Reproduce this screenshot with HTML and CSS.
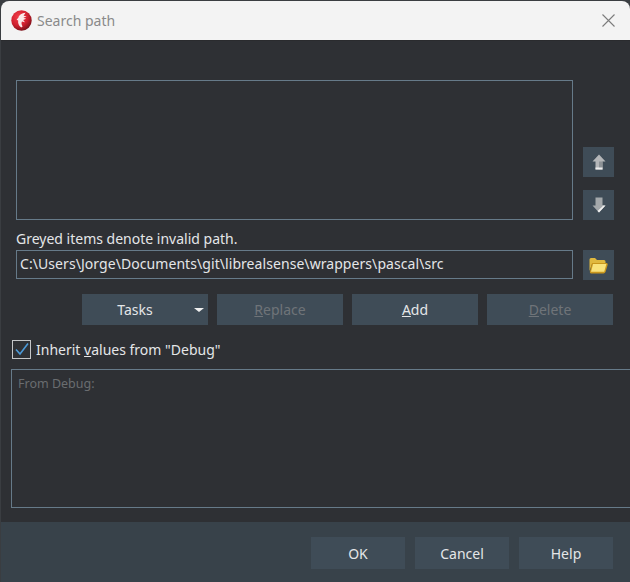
FILE: index.html
```html
<!DOCTYPE html>
<html lang="en">
<head>
    <meta charset="UTF-8">
    <meta name="viewport" content="width=device-width, initial-scale=1.0">
    <title>Search path</title>
    <link rel="stylesheet" href="styles.css">
</head>
<body>
    <div class="dialog">
        <div class="titlebar">
            <svg class="logo" width="21" height="21" viewBox="0 0 21 21">
                <defs>
                    <radialGradient id="logoRed" cx="38%" cy="32%" r="72%">
                        <stop offset="0%" stop-color="#f4404c"/>
                        <stop offset="60%" stop-color="#cf1f2e"/>
                        <stop offset="100%" stop-color="#761018"/>
                    </radialGradient>
                </defs>
                <circle cx="10.5" cy="10.5" r="10.2" fill="url(#logoRed)"/>
                <path d="M14.5 2.8 C11 3 8 5 7.5 7.5 L5.6 9.8 L7.2 10.4 C6.8 13 7.6 15.6 10.2 17.4 L11.6 16.4 C10.4 14.6 10.2 13 11 11.6 L14 12.2 L12.2 10 L15.2 8.8 L12.4 7.8 L15.6 6.2 L12.6 5.8 Z" fill="#fbeaea"/>
            </svg>
            <span class="title">Search path</span>
            <svg class="close" width="13" height="13" viewBox="0 0 13 13">
                <path d="M0.5 0.5 L12.5 12.5 M12.5 0.5 L0.5 12.5" stroke="#7c7c7c" stroke-width="1.1" fill="none"/>
            </svg>
        </div>

        <div class="content">
            <div class="list-row">
                <div class="path-list"></div>
                <div class="move-buttons">
                    <button class="btn icon-btn">
                        <svg width="14" height="16" viewBox="0 0 14 16">
                            <path d="M7 0.5 L13.5 7.5 L10.5 7.5 L10.5 15.5 L3.5 15.5 L3.5 7.5 L0.5 7.5 Z" fill="#b4b6b8"/>
                            <path d="M7 7.5 L10.5 7.5 L10.5 15.5 L7 15.5 Z" fill="#8d9296"/>
                            <path d="M3.5 13.5 L10.5 13.5 L10.5 15.5 L3.5 15.5 Z" fill="#eeeeee"/>
                        </svg>
                    </button>
                    <button class="btn icon-btn">
                        <svg width="14" height="16" viewBox="0 0 14 16">
                            <path d="M3.5 0.5 L10.5 0.5 L10.5 8.5 L13.5 8.5 L7 15.5 L0.5 8.5 L3.5 8.5 Z" fill="#a4a8ab"/>
                            <path d="M13.5 8.5 L7 15.5 L5.5 14 L10.5 9.5 L10.5 8.5 Z" fill="#f0f0f0"/>
                        </svg>
                    </button>
                </div>
            </div>

            <div class="hint">Greyed items denote invalid path.</div>

            <div class="path-row">
                <div class="path-input">C:\Users\Jorge\Documents\git\librealsense\wrappers\pascal\src</div>
                <button class="btn icon-btn">
                    <svg width="19" height="17" viewBox="0 0 19 17">
                        <path d="M0.5 14 L0.5 2.5 Q0.5 1 2 1 L6 1 L8 3 L15 3 Q16.5 3 16.5 4.5 L16.5 7 L3 7 Z" fill="#e0b83e"/>
                        <path d="M0.8 15 L3 6 L17.8 6 Q19 6.5 18.7 7.8 L16.6 14.8 Q16 16.4 14.5 16.4 L2 16.4 Q0.8 16.4 0.8 15 Z" fill="#c9961c"/>
                        <path d="M2 14.8 L4 7 L17.4 7 L15.2 14.8 Z" fill="#f9e27a"/>
                    </svg>
                </button>
            </div>

            <div class="action-row">
                <button class="btn action-btn tasks-btn"><span class="tasks-label">Tasks</span><span class="caret"></span></button>
                <button class="btn action-btn" disabled><u>R</u>eplace</button>
                <button class="btn action-btn"><u>A</u>dd</button>
                <button class="btn action-btn" disabled><u>D</u>elete</button>
            </div>

            <label class="inherit">
                <span class="checkbox">
                    <svg width="17" height="17" viewBox="0 0 17 17">
                        <path d="M3 8.5 L7 13 L15 2.5" stroke="#4c9ad8" stroke-width="1.6" fill="none"/>
                    </svg>
                </span>
                <span>Inherit <u>v</u>alues from "Debug"</span>
            </label>

            <div class="memo">From Debug:</div>
        </div>

        <div class="footer">
            <button class="btn footer-btn">OK</button>
            <button class="btn footer-btn">Cancel</button>
            <button class="btn footer-btn">Help</button>
        </div>
    </div>
</body>
</html>
```

FILE: styles.css
```css
* {
    box-sizing: border-box;
}

html, body {
    margin: 0;
    height: 582px;
    overflow: hidden;
    background: #3a3d41;
}

body {
    font-family: 'Noto Sans', 'Open Sans', sans-serif;
    font-size: 14px;
    color: #e4e6e8;
}

.dialog {
    height: 581px;
    margin-top: 1px;
    margin-left: 1px;
    display: flex;
    flex-direction: column;
    background: #2e3034;
    border-radius: 8px 8px 0 0;
    overflow: hidden;
}

.titlebar {
    height: 40px;
    flex: none;
    display: flex;
    align-items: center;
    padding: 0 15px 0 10px;
    background: #f3f3f3;
    border-bottom: 1px solid #2a2b2e;
}

.title {
    margin-left: 5px;
    color: #8a8a8a;
    flex: 1;
}

.content {
    flex: 1;
    padding: 39px 16px 0 15px;
}

.btn {
    font: inherit;
    color: inherit;
    border: none;
    padding: 0;
    background: #3f4c57;
    border-radius: 0;
}

.btn:disabled {
    color: #6f7479;
}

.icon-btn {
    width: 31px;
    height: 30px;
    display: flex;
    align-items: center;
    justify-content: center;
    flex: none;
}

.list-row {
    display: flex;
    gap: 10px;
}

.path-list {
    width: 557px;
    height: 140px;
    border: 1px solid #667a89;
}

.move-buttons {
    display: flex;
    flex-direction: column;
    justify-content: flex-end;
    gap: 13px;
}

.hint {
    margin-top: 9px;
    height: 21px;
    line-height: 19px;
}

.path-row {
    display: flex;
    gap: 10px;
}

.path-input {
    width: 557px;
    height: 29px;
    line-height: 26px;
    padding-left: 3px;
    border: 1px solid #667a89;
    white-space: nowrap;
    letter-spacing: 0.065px;
}

.action-row {
    display: flex;
    gap: 9px;
    margin-top: 14px;
    padding-left: 66px;
}

.action-btn {
    width: 126px;
    height: 31px;
}

.tasks-btn {
    display: flex;
    align-items: center;
}

.tasks-label {
    flex: 1;
    padding-right: 6px;
}

.caret {
    width: 0;
    height: 0;
    margin-right: 4px;
    border-left: 5px solid transparent;
    border-right: 5px solid transparent;
    border-top: 4px solid #f0f0f0;
}

.inherit {
    display: flex;
    align-items: center;
    gap: 5px;
    margin: 15px 0 0 -4px;
    height: 19px;
}

.checkbox {
    width: 19px;
    height: 19px;
    border: 1px solid #c4c6c8;
    display: flex;
    align-items: center;
    justify-content: center;
}

.memo {
    width: 630px;
    height: 139px;
    margin: 10px 0 0 -5px;
    padding: 5px 6px;
    border: 1px solid #667a89;
    color: #6a6d70;
    font-size: 12.5px;
}

.footer {
    height: 60px;
    flex: none;
    display: flex;
    justify-content: flex-end;
    align-items: flex-start;
    gap: 10px;
    padding: 15px 17px 0 0;
    background: #38424a;
}

.footer-btn {
    width: 94px;
    height: 32px;
}
```
